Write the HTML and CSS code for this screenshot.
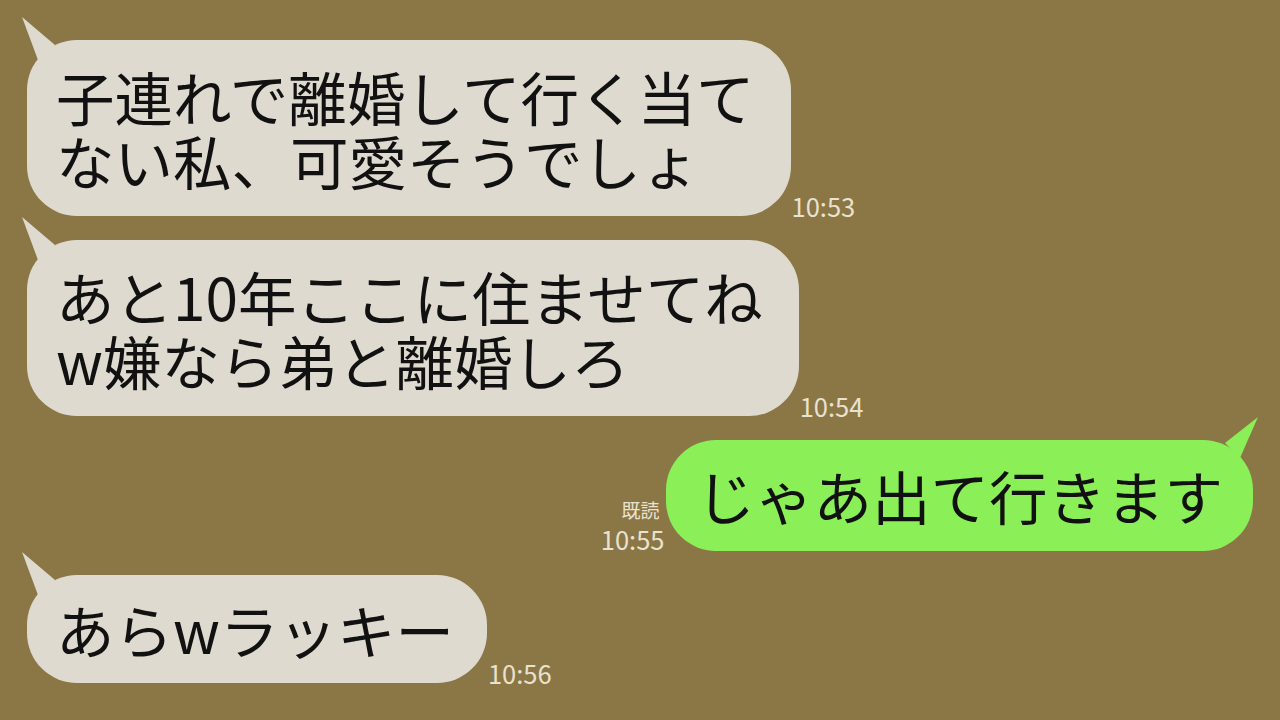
FILE: index.html
```html
<!DOCTYPE html>
<html lang="ja">
<head>
<meta charset="utf-8">
<title>chat</title>
<link rel="stylesheet" href="styles.css">
</head>
<body>
<main class="chat">
  <div class="row row-left">
    <div class="bubble bubble-in">子連れで離婚して行く当て<br>ない私、可愛そうでしょ</div>
    <div class="meta"><span class="time">10:53</span></div>
  </div>
  <div class="row row-left">
    <div class="bubble bubble-in">あと10年ここに住ませてね<br>w嫌なら弟と離婚しろ</div>
    <div class="meta"><span class="time">10:54</span></div>
  </div>
  <div class="row row-right">
    <div class="meta meta-right"><span class="read">既読</span><span class="time">10:55</span></div>
    <div class="bubble bubble-out">じゃあ出て行きます</div>
  </div>
  <div class="row row-left">
    <div class="bubble bubble-in bubble-single">あらwラッキー</div>
    <div class="meta"><span class="time">10:56</span></div>
  </div>
</main>
</body>
</html>
```
FILE: styles.css
```css
html, body {
  margin: 0;
  padding: 0;
}
body {
  width: 1280px;
  height: 720px;
  overflow: hidden;
  background: #8b7646;
  font-family: "Noto Sans CJK JP", "Noto Sans", sans-serif;
}
.chat {
  display: flex;
  flex-direction: column;
  gap: 24px;
  padding: 40px 27px 0 27px;
}
.row {
  display: flex;
  align-items: flex-end;
}
.row-right {
  justify-content: flex-end;
}
.bubble {
  position: relative;
  font-size: 58.5px;
  line-height: 64px;
  color: #111;
  padding: 24px 36px 24px 29px;
  border-radius: 50px;
  white-space: nowrap;
}
.bubble::before {
  content: "";
  position: absolute;
  top: -25px;
  width: 40px;
  height: 50px;
  background: inherit;
}
.bubble-in {
  background: #dedad0;
}
.bubble-in::before {
  left: -5px;
  clip-path: polygon(0 2px, 33px 30px, 16px 45px);
}
.bubble-single {
  padding: 22px 33px 22px 29px;
}
.bubble-out {
  background: #8bef57;
  padding: 23px 30px 24px 30px;
}
.bubble-out::before {
  right: -5px;
  clip-path: polygon(40px 2px, 7px 28px, 22px 43px);
}
.meta {
  display: flex;
  flex-direction: column;
  color: #e9e2cf;
  margin-left: 1px;
  margin-bottom: -2px;
}
.meta-right {
  margin-left: 0;
  margin-right: 2px;
  align-items: flex-end;
  margin-bottom: 0;
}
.time {
  font-size: 25.5px;
  line-height: 25px;
}
.read {
  font-size: 19px;
  line-height: 20px;
  margin-right: 5px;
  margin-bottom: 6px;
}
```
